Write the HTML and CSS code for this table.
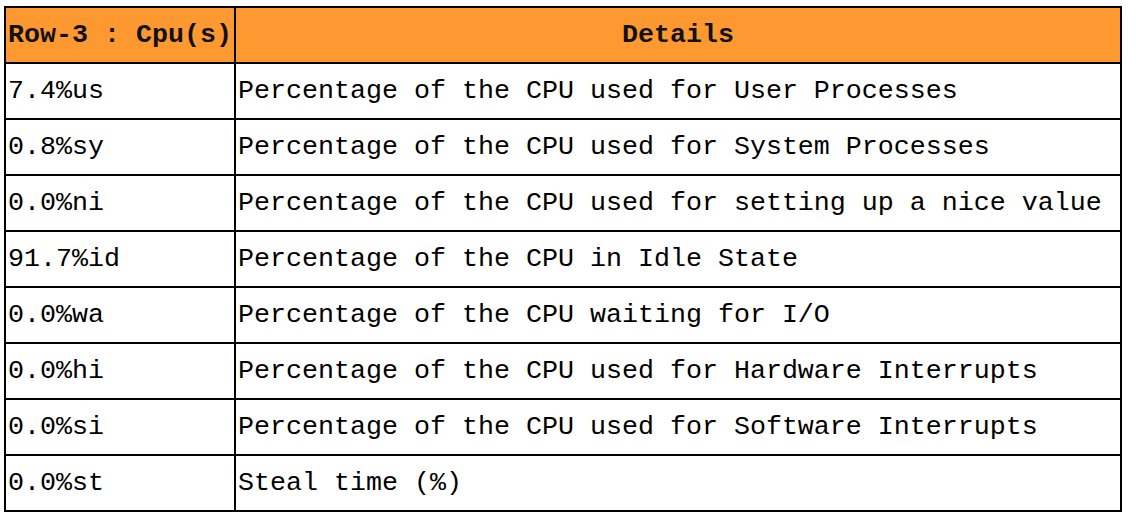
FILE: index.html
```html
<!DOCTYPE html>
<html>
<head>
<meta charset="utf-8">
<link rel="stylesheet" href="styles.css">
</head>
<body>
<table class="cpu-table">
  <thead>
    <tr><th class="c1">Row-3 : Cpu(s)</th><th class="c2">Details</th></tr>
  </thead>
  <tbody>
    <tr><td>7.4%us</td><td>Percentage of the CPU used for User Processes</td></tr>
    <tr><td>0.8%sy</td><td>Percentage of the CPU used for System Processes</td></tr>
    <tr><td>0.0%ni</td><td>Percentage of the CPU used for setting up a nice value</td></tr>
    <tr><td>91.7%id</td><td>Percentage of the CPU in Idle State</td></tr>
    <tr><td>0.0%wa</td><td>Percentage of the CPU waiting for I/O</td></tr>
    <tr><td>0.0%hi</td><td>Percentage of the CPU used for Hardware Interrupts</td></tr>
    <tr><td>0.0%si</td><td>Percentage of the CPU used for Software Interrupts</td></tr>
    <tr><td>0.0%st</td><td>Steal time (%)</td></tr>
  </tbody>
</table>
</body>
</html>
```
FILE: styles.css
```css
html, body {
  background: #ffffff;
}
body {
  margin: 6px 0 0 4px;
  font-family: "Liberation Mono", "DejaVu Sans Mono", monospace;
  font-size: 26.67px;
  color: #000;
}
.cpu-table {
  border-collapse: collapse;
  width: 1118px;
  table-layout: fixed;
}
.cpu-table th,
.cpu-table td {
  border: 2px solid #000;
  padding: 0 2px;
  height: 54px;
  text-align: left;
  vertical-align: middle;
  white-space: nowrap;
  line-height: 30px;
}
.cpu-table th {
  background: #fe9830;
  font-weight: bold;
  color: #111;
}
.cpu-table .c1 {
  width: 224px;
}
.cpu-table .c2 {
  text-align: center;
}
```
